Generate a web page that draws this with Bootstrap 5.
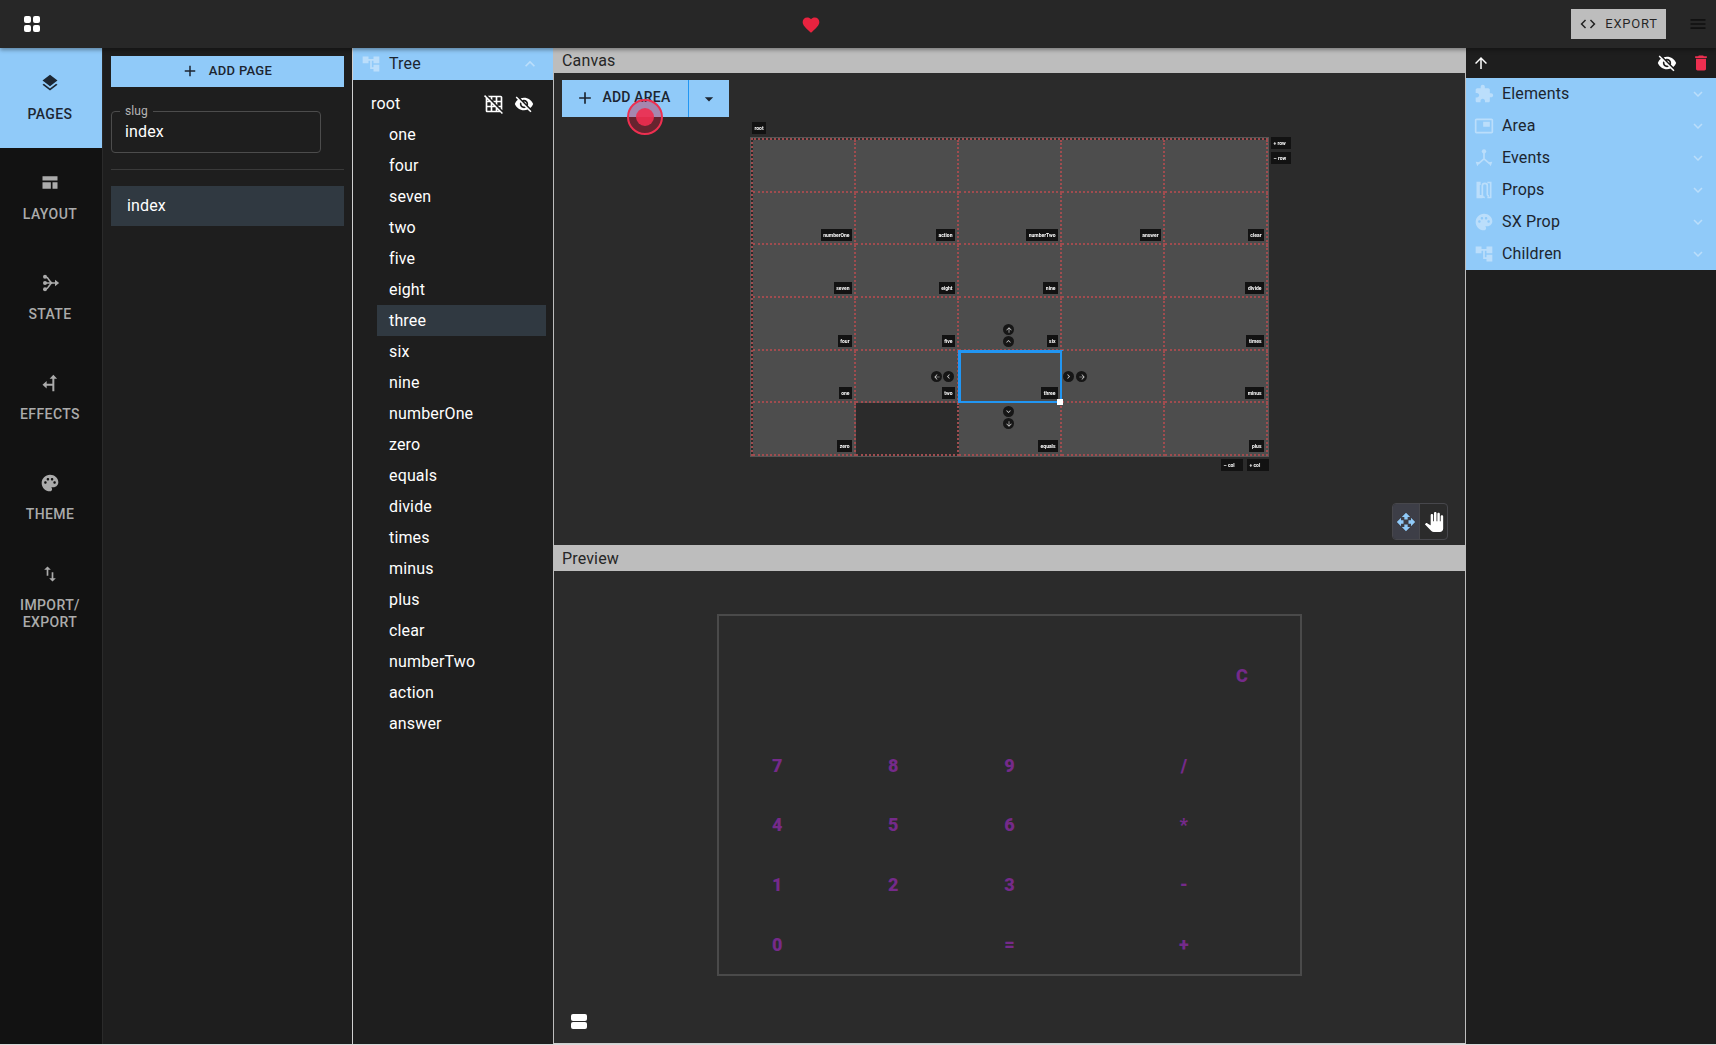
<!DOCTYPE html>
<html lang="en">
<head>
<meta charset="utf-8">
<title>Calculator builder</title>
<link href="https://cdn.jsdelivr.net/npm/bootstrap@5.3.0/dist/css/bootstrap.min.css" rel="stylesheet">
<style>
html,body{height:100%;margin:0;background:#d8d8d8;overflow:hidden}
body{font-family:Roboto,"Liberation Sans",sans-serif;font-size:16px;letter-spacing:.15px;color:#fff}
.ico{fill:currentColor;display:block}
.shell{height:calc(100vh - 1px);background:#1e1e1e}
.topbar{height:48px;background:#272727;flex:none;position:relative;z-index:5;box-shadow:0 2px 4px rgba(0,0,0,.35)}
.heart-slot{position:absolute;left:801px;top:15px;color:#e8233f}
.export-btn{width:95px;height:30px;margin-right:50px;background:#bdbdbd;color:rgba(0,0,0,.82);font-size:13px;font-weight:400;letter-spacing:.75px;border:0;border-radius:0;padding:0;gap:8px}
.export-btn:hover{background:#bdbdbd}
.burger{position:absolute;right:8px;top:14px;color:#111}
.apps{margin-left:24px;display:grid;grid-template-columns:7px 7px;gap:2px}
.apps i{display:block;width:7px;height:7px;border-radius:2px;background:#fff}
.rail{width:103px;flex:none;background:#121212;border-right:1px solid #2a2a2a}
.rail-item{height:100px;padding:0 2px 1px 0;color:#ababab;font-size:14px;font-weight:500;letter-spacing:.4px;line-height:17px;text-transform:uppercase;text-align:center;gap:13px}
.rail-item.active-rail{background:#90caf9;color:#1d2733}
.pages-col{width:249px;flex:none;background:#1e1e1e;padding:8px 8px 0 8px}
.blue-btn{background:#90caf9;color:#1c2530;border:0;border-radius:0;font-size:13px;font-weight:500;letter-spacing:.3px;padding:0}
.blue-btn:hover{background:#90caf9;color:#1c2530}
.add-page{width:100%;height:31px;gap:10px;padding:0 2px 2px 0}
.slug-box{position:relative;width:210px;height:42px;margin-top:24px;border:1px solid #4c4c4c;border-radius:4px;padding:10px 13px 0;line-height:20px}
.slug-box span{position:absolute;left:8px;top:-8px;padding:0 5px;background:#1e1e1e;font-size:12px;line-height:14px;color:#b5b5b5;letter-spacing:.1px}
.rule{height:1px;background:#3a3a3a;margin:16px 0}
.page-row{height:40px;background:#303941;padding-left:16px;line-height:40px}
.tree-col{width:201px;flex:none;background:#1e1e1e;border-left:1px solid #d0d0d0}
.pane-head{height:32px;background:#90caf9;color:#1c2530;padding-left:8px;padding-right:13px;gap:8px}
.pale{color:#bbdefb}
.root-row{height:31px;margin-top:8px;padding-left:18px;padding-right:19px}
.icon-pair{display:flex;gap:10px}
.tree-list{padding:0 7px 0 24px}
.tree-row{height:31px;line-height:31px;padding-left:12px;background:transparent;border:0;color:#fff;border-radius:0}
.tree-row.on{background:#303941}
.work-col{flex:1 1 auto;min-width:0;background:#2b2b2b;border-left:1px solid #bdbdbd;border-right:1px solid #bdbdbd;border-bottom:1px solid #cfcfcf}
.bar{background:#bdbdbd;color:#262626;padding-left:8px;flex:none}
.canvas-pane{height:497px;position:relative}
.canvas-pane .bar{height:25px;line-height:25px}
.add-group{margin:7px 0 0 8px;height:37px;width:167px;position:relative}
.add-main{width:127px;height:37px;gap:8px;font-size:14px;letter-spacing:.2px;border-right:1px solid #2196f3;padding:0 5px 2px 0}
.add-caret{width:40px;height:37px}
.click-dot{position:absolute;left:65px;top:19px;width:36px;height:36px;border-radius:50%;border:2px solid #ee2f50;background:rgba(200,25,55,.38);display:flex;align-items:center;justify-content:center}
.click-dot i{display:block;width:18px;height:18px;border-radius:50%;background:rgba(240,45,80,.9)}
.area-wrap{position:relative;width:517px;height:318px;margin:21px 0 0 197px}
.area-grid{display:grid;grid-template-columns:repeat(5,1fr);grid-template-rows:repeat(6,1fr);width:100%;height:100%;border-top:2px dotted #a04c4f;border-left:2px dotted #a04c4f;box-shadow:0 0 0 1px #555}
.cell{position:relative;background:#4d4d4d;border-right:2px dotted #a04c4f;border-bottom:2px dotted #a04c4f}
.cell.void{background:#2b2b2b}
.cell.picked{outline:3px solid #2196f3;outline-offset:-2px}
.tag{position:absolute;background:#121212;color:#fff;font-size:5px;font-weight:700;letter-spacing:0;line-height:12px;height:12px;padding:0 2.5px;white-space:nowrap}
.tag b{filter:blur(.3px);font-weight:700}
.cell .tag{right:2px;bottom:2px}
.tag-root{left:1px;top:-16px}
.tag-a{left:520px;top:-1px;width:20px}
.tag-b{left:520px;top:14px;width:20px}
.tag-c{left:470px;top:321px;width:22px}
.tag-d{left:496px;top:321px;width:22px}
.round{position:absolute;width:11px;height:11px;border-radius:50%;background:#161616;color:#d0d0d0;display:flex;align-items:center;justify-content:center}
.handle{position:absolute;left:306px;top:261px;width:6px;height:6px;background:#fff}
.view-toggle{position:absolute;right:17px;bottom:5px;width:56px;height:37px;border:1px solid #47474c;border-radius:4px;overflow:hidden}
.view-toggle div{width:28px;display:flex;align-items:center;justify-content:center}
.view-toggle .sel{background:#3d3e47;color:#90caf9;border-right:1px solid #47474c}
.preview-pane{flex:1 1 auto;position:relative;min-height:0}
.preview-pane .bar{height:26px;line-height:27px}
.calc{display:grid;grid-template-columns:repeat(5,1fr);grid-template-rows:repeat(6,1fr);width:585px;height:362px;margin:43px 0 0 163px;border:2px solid #4a4a4a;color:#752a8a;font-weight:900;font-size:18px;letter-spacing:0;align-items:center;justify-items:center}
.agenda{position:absolute;left:17px;bottom:13px;width:16px}
.agenda i{display:block;height:7px;border-radius:2px;background:#fff;margin-bottom:1px}
.props-col{width:250px;flex:none;background:#1e1e1e}
.props-top{height:30px;padding:0 5px 0 6px;color:#fff}
.top-pair{display:flex;align-items:center;gap:14px}
.trash{color:#ee2f50}
.acc-row{height:32px;background:#90caf9;color:#1c2530;padding:0 9px 0 8px;border:0;border-radius:0;gap:8px}
.acc-label{flex:1 1 auto}
</style>
</head>
<body>
<svg width="0" height="0" class="position-absolute" aria-hidden="true">
<symbol id="i-layers" viewBox="0 0 24 24"><path d="M11.99 18.54l-7.37-5.73L3 14.07l9 7 9-7-1.63-1.27-7.38 5.74zM12 16l7.36-5.73L21 9l-9-7-9 7 1.63 1.27L12 16z"/></symbol>
<symbol id="i-web" viewBox="0 0 24 24"><path d="M3 4h18v5H3zM3 11h10v8H3zM15 11h6v8h-6z"/></symbol>
<symbol id="i-state" viewBox="0 0 24 24"><path fill="none" stroke="currentColor" stroke-width="2" d="M7 5c4 0 4 7 8 7H19M7 19c4 0 4-7 8-7M7 12h8"/><circle cx="6" cy="4.5" r="2.4"/><circle cx="6" cy="12" r="2.4"/><circle cx="6" cy="19.5" r="2.4"/><path d="M18 8l5 4-5 4z"/></symbol>
<symbol id="i-effects" viewBox="0 0 24 24"><path d="M16 2l4.5 5h-3.3v15h-2.4V7h-3.3zM3 14l5-4.5v3.3h7v2.4H8v3.3z"/></symbol>
<symbol id="i-palette" viewBox="0 0 24 24"><path d="M12 2C6.49 2 2 6.49 2 12s4.49 10 10 10c1.38 0 2.5-1.12 2.5-2.5 0-.61-.23-1.2-.64-1.67-.08-.1-.13-.21-.13-.33 0-.28.22-.5.5-.5H16c3.31 0 6-2.69 6-6 0-4.96-4.49-9-10-9zm-5.5 11c-.83 0-1.5-.67-1.5-1.5S5.67 10 6.5 10s1.5.67 1.5 1.5S7.33 13 6.5 13zm3-4C8.67 9 8 8.33 8 7.5S8.67 6 9.5 6s1.5.67 1.5 1.5S10.33 9 9.5 9zm5 0c-.83 0-1.5-.67-1.5-1.5S13.67 6 14.5 6s1.5.67 1.5 1.5S15.33 9 14.5 9zm3 4c-.83 0-1.5-.67-1.5-1.5s.67-1.5 1.5-1.5 1.5.67 1.5 1.5-.67 1.5-1.5 1.5z"/></symbol>
<symbol id="i-impexp" viewBox="0 0 24 24"><path d="M9 3L5 6.99h3V14h2V6.99h3L9 3zm7 14.01V10h-2v7.01h-3L15 21l4-3.99h-3z"/></symbol>
<symbol id="i-ext" viewBox="0 0 24 24"><path d="M20.5 11H19V7c0-1.1-.9-2-2-2h-4V3.5C13 2.12 11.88 1 10.5 1S8 2.12 8 3.5V5H4c-1.1 0-1.99.9-1.99 2v3.8H3.5c1.49 0 2.7 1.21 2.7 2.7s-1.21 2.7-2.7 2.7H2V20c0 1.1.9 2 2 2h3.8v-1.5c0-1.49 1.21-2.7 2.7-2.7 1.49 0 2.7 1.21 2.7 2.7V22H17c1.1 0 2-.9 2-2v-4h1.5c1.38 0 2.5-1.12 2.5-2.5S21.88 11 20.5 11z"/></symbol>
<symbol id="i-pip" viewBox="0 0 24 24"><path d="M19 7h-8v6h8V7zm2-4H3c-1.1 0-2 .9-2 2v14c0 1.1.9 1.98 2 1.98h18c1.1 0 2-.88 2-1.98V5c0-1.1-.9-2-2-2zm0 16.01H3V4.98h18v14.03z"/></symbol>
<symbol id="i-events" viewBox="0 0 24 24"><path fill="none" stroke="currentColor" stroke-width="2" d="M12 5v8M12 13l-7 6M12 13l7 6"/><circle cx="12" cy="4" r="2.6"/><path d="M2 16.5l5 .5-3 5zM22 16.5l-5 .5 3 5z"/></symbol>
<symbol id="i-props" viewBox="0 0 24 24"><path fill="none" stroke="currentColor" stroke-width="2" d="M8 3H4v18h5v-2H6V5h2M13 21c-2 0-3-1-3-3V7c0-2 1-3 3-3s3 1 3 3v10c0 1 .5 2 2 2M16 3h4v18h-4"/></symbol>
<symbol id="i-tree" viewBox="0 0 24 24"><path d="M22 11V3h-7v3H9V3H2v8h7V8h2v10h4v3h7v-8h-7v3h-2V8h2v3z"/></symbol>
<symbol id="i-eyeoff" viewBox="0 0 24 24"><path d="M12 7c2.76 0 5 2.24 5 5 0 .65-.13 1.26-.36 1.83l2.92 2.92c1.51-1.26 2.7-2.89 3.43-4.75-1.73-4.39-6-7.5-11-7.5-1.4 0-2.74.25-3.98.7l2.16 2.16C10.74 7.13 11.35 7 12 7zM2 4.27l2.28 2.28.46.46C3.08 8.3 1.78 10.02 1 12c1.73 4.39 6 7.5 11 7.5 1.55 0 3.03-.3 4.38-.84l.42.42L19.73 22 21 20.73 3.27 3 2 4.27zM7.53 9.8l1.55 1.55c-.05.21-.08.43-.08.65 0 1.66 1.34 3 3 3 .22 0 .44-.03.65-.08l1.55 1.55c-.67.33-1.41.53-2.2.53-2.76 0-5-2.24-5-5 0-.79.2-1.53.53-2.2zm4.31-.78l3.15 3.15.02-.16c0-1.66-1.34-3-3-3l-.17.01z"/></symbol>
<symbol id="i-gridoff" viewBox="0 0 24 24"><path d="M8 4v1.45l2 2V4h4v4h-3.45l2 2H14v1.45l2 2V10h4v4h-3.45l2 2H20v1.45l2 2V4c0-1.1-.9-2-2-2H4.55l2 2H8zm8 0h4v4h-4V4zM1.27 1.27L0 2.55l2 2V20c0 1.1.9 2 2 2h15.46l2 2 1.27-1.27L1.27 1.27zM10 12.55L11.45 14H10v-1.45zm-6-6L5.45 8H4V6.55zM8 20H4v-4h4v4zm0-6H4v-4h3.45l.55.55V14zm6 6h-4v-4h3.45l.55.55V20zm2 0v-1.45L17.45 20H16z"/></symbol>
<symbol id="i-del" viewBox="0 0 24 24"><path d="M6 19c0 1.1.9 2 2 2h8c1.1 0 2-.9 2-2V7H6v12zM19 4h-3.5l-1-1h-5l-1 1H5v2h14V4z"/></symbol>
<symbol id="i-up" viewBox="0 0 24 24"><path d="M4 12l1.41 1.41L11 7.83V20h2V7.83l5.58 5.59L20 12l-8-8-8 8z"/></symbol>
<symbol id="i-code" viewBox="0 0 24 24"><path d="M9.4 16.6L4.8 12l4.6-4.6L8 6l-6 6 6 6 1.4-1.4zm5.2 0l4.6-4.6-4.6-4.6L16 6l6 6-6 6-1.4-1.4z"/></symbol>
<symbol id="i-menu" viewBox="0 0 24 24"><path d="M3 18h18v-2H3v2zm0-5h18v-2H3v2zm0-7v2h18V6H3z"/></symbol>
<symbol id="i-heart" viewBox="0 0 24 24"><path d="M12 21.35l-1.45-1.32C5.4 15.36 2 12.28 2 8.5 2 5.42 4.42 3 7.5 3c1.74 0 3.41.81 4.5 2.09C13.09 3.81 14.76 3 16.5 3 19.58 3 22 5.42 22 8.5c0 3.78-3.4 6.86-8.55 11.54L12 21.35z"/></symbol>
<symbol id="i-add" viewBox="0 0 24 24"><path d="M19 13h-6v6h-2v-6H5v-2h6V5h2v6h6v2z"/></symbol>
<symbol id="i-more" viewBox="0 0 24 24"><path d="M16.59 8.59L12 13.17 7.41 8.59 6 10l6 6 6-6z"/></symbol>
<symbol id="i-less" viewBox="0 0 24 24"><path d="M12 8l-6 6 1.41 1.41L12 10.83l4.59 4.58L18 14z"/></symbol>
<symbol id="i-drop" viewBox="0 0 24 24"><path d="M7 10l5 5 5-5z"/></symbol>
<symbol id="i-move" viewBox="0 0 24 24"><path d="M10 9h4V6h3l-5-5-5 5h3v3zm-1 1H6V7l-5 5 5 5v-3h3v-4zm14 2l-5-5v3h-3v4h3v3l5-5zm-9 3h-4v3H7l5 5 5-5h-3v-3z"/></symbol>
<symbol id="i-hand" viewBox="0 0 24 24"><path d="M23 5.5V20c0 2.2-1.8 4-4 4h-7.3c-1.08 0-2.1-.43-2.85-1.19L1 14.83s1.26-1.23 1.3-1.25c.22-.19.49-.29.79-.29.22 0 .42.06.6.16.04.01 4.31 2.46 4.31 2.46V4c0-.83.67-1.5 1.5-1.5S11 3.17 11 4v7h1V1.5c0-.83.67-1.5 1.5-1.5S15 .67 15 1.5V11h1V2.5c0-.83.67-1.5 1.5-1.5s1.5.67 1.5 1.5V11h1V5.5c0-.83.67-1.5 1.5-1.5s1.5.67 1.5 1.5z"/></symbol>
</svg>

<div class="shell d-flex flex-column">
  <header class="topbar d-flex align-items-center justify-content-between">
    <div class="apps"><i></i><i></i><i></i><i></i></div>
    <div class="heart-slot"><svg class="ico" width="20" height="20"><use href="#i-heart"/></svg></div>
    <button type="button" class="btn export-btn d-flex align-items-center justify-content-center"><svg class="ico" width="18" height="18"><use href="#i-code"/></svg>EXPORT</button>
    <div class="burger"><svg class="ico" width="20" height="20"><use href="#i-menu"/></svg></div>
  </header>

  <div class="d-flex flex-grow-1" style="min-height:0">
    <nav class="rail d-flex flex-column">
      <div class="rail-item active-rail d-flex flex-column align-items-center justify-content-center"><svg class="ico" width="20" height="20"><use href="#i-layers"/></svg><span>Pages</span></div>
      <div class="rail-item d-flex flex-column align-items-center justify-content-center"><svg class="ico" width="20" height="20"><use href="#i-web"/></svg><span>Layout</span></div>
      <div class="rail-item d-flex flex-column align-items-center justify-content-center"><svg class="ico" width="20" height="20"><use href="#i-state"/></svg><span>State</span></div>
      <div class="rail-item d-flex flex-column align-items-center justify-content-center"><svg class="ico" width="20" height="20"><use href="#i-effects"/></svg><span>Effects</span></div>
      <div class="rail-item d-flex flex-column align-items-center justify-content-center"><svg class="ico" width="20" height="20"><use href="#i-palette"/></svg><span>Theme</span></div>
      <div class="rail-item d-flex flex-column align-items-center justify-content-center"><svg class="ico" width="20" height="20"><use href="#i-impexp"/></svg><span>Import/<br>Export</span></div>
    </nav>

    <section class="pages-col">
      <button type="button" class="btn blue-btn add-page d-flex align-items-center justify-content-center"><svg class="ico" width="18" height="18"><use href="#i-add"/></svg>ADD PAGE</button>
      <div class="slug-box"><span>slug</span>index</div>
      <div class="rule"></div>
      <div class="page-row">index</div>
    </section>

    <section class="tree-col">
      <div class="pane-head d-flex align-items-center"><svg class="ico pale" width="20" height="20"><use href="#i-tree"/></svg><span class="flex-grow-1">Tree</span><svg class="ico pale" width="20" height="20"><use href="#i-less"/></svg></div>
      <div class="root-row d-flex align-items-center justify-content-between">
        <span>root</span>
        <span class="icon-pair"><svg class="ico" width="20" height="20"><use href="#i-gridoff"/></svg><svg class="ico" width="20" height="20"><use href="#i-eyeoff"/></svg></span>
      </div>
      <div class="list-group tree-list">
        <div class="tree-row">one</div><div class="tree-row">four</div><div class="tree-row">seven</div><div class="tree-row">two</div><div class="tree-row">five</div><div class="tree-row">eight</div><div class="tree-row on">three</div><div class="tree-row">six</div><div class="tree-row">nine</div><div class="tree-row">numberOne</div><div class="tree-row">zero</div><div class="tree-row">equals</div><div class="tree-row">divide</div><div class="tree-row">times</div><div class="tree-row">minus</div><div class="tree-row">plus</div><div class="tree-row">clear</div><div class="tree-row">numberTwo</div><div class="tree-row">action</div><div class="tree-row">answer</div>
      </div>
    </section>

    <main class="work-col d-flex flex-column">
      <section class="canvas-pane">
        <div class="bar">Canvas</div>
        <div class="add-group d-flex">
          <button type="button" class="btn blue-btn add-main d-flex align-items-center justify-content-center"><svg class="ico" width="20" height="20"><use href="#i-add"/></svg>ADD AREA</button>
          <button type="button" class="btn blue-btn add-caret d-flex align-items-center justify-content-center"><svg class="ico" width="20" height="20"><use href="#i-drop"/></svg></button>
          <div class="click-dot"><i></i></div>
        </div>
        <div class="area-wrap">
          <div class="area-grid">
            <div class="cell"></div><div class="cell"></div><div class="cell"></div><div class="cell"></div><div class="cell"></div>
            <div class="cell"><span class="tag"><b>numberOne</b></span></div><div class="cell"><span class="tag"><b>action</b></span></div><div class="cell"><span class="tag"><b>numberTwo</b></span></div><div class="cell"><span class="tag"><b>answer</b></span></div><div class="cell"><span class="tag"><b>clear</b></span></div>
            <div class="cell"><span class="tag"><b>seven</b></span></div><div class="cell"><span class="tag"><b>eight</b></span></div><div class="cell"><span class="tag"><b>nine</b></span></div><div class="cell"></div><div class="cell"><span class="tag"><b>divide</b></span></div>
            <div class="cell"><span class="tag"><b>four</b></span></div><div class="cell"><span class="tag"><b>five</b></span></div><div class="cell"><span class="tag"><b>six</b></span></div><div class="cell"></div><div class="cell"><span class="tag"><b>times</b></span></div>
            <div class="cell"><span class="tag"><b>one</b></span></div><div class="cell"><span class="tag"><b>two</b></span></div><div class="cell picked"><span class="tag"><b>three</b></span></div><div class="cell"></div><div class="cell"><span class="tag"><b>minus</b></span></div>
            <div class="cell"><span class="tag"><b>zero</b></span></div><div class="cell void"></div><div class="cell"><span class="tag"><b>equals</b></span></div><div class="cell"></div><div class="cell"><span class="tag"><b>plus</b></span></div>
          </div>
          <span class="tag tag-root"><b>root</b></span>
          <span class="tag tag-a"><b>+ row</b></span>
          <span class="tag tag-b"><b>– row</b></span>
          <span class="tag tag-c"><b>– col</b></span>
          <span class="tag tag-d"><b>+ col</b></span>
          <span class="round" style="left:252px;top:186px"><svg class="ico" width="8" height="8"><use href="#i-up"/></svg></span>
          <span class="round" style="left:252px;top:198px"><svg class="ico" width="9" height="9"><use href="#i-less"/></svg></span>
          <span class="round" style="left:252px;top:268px"><svg class="ico" width="9" height="9"><use href="#i-more"/></svg></span>
          <span class="round" style="left:252px;top:280px"><svg class="ico" width="8" height="8" style="transform:rotate(180deg)"><use href="#i-up"/></svg></span>
          <span class="round" style="left:180px;top:233px"><svg class="ico" width="8" height="8" style="transform:rotate(-90deg)"><use href="#i-up"/></svg></span>
          <span class="round" style="left:192px;top:233px"><svg class="ico" width="9" height="9" style="transform:rotate(-90deg)"><use href="#i-less"/></svg></span>
          <span class="round" style="left:312px;top:233px"><svg class="ico" width="9" height="9" style="transform:rotate(90deg)"><use href="#i-less"/></svg></span>
          <span class="round" style="left:325px;top:233px"><svg class="ico" width="8" height="8" style="transform:rotate(90deg)"><use href="#i-up"/></svg></span>
          <span class="handle"></span>
        </div>
        <div class="view-toggle d-flex">
          <div class="sel"><svg class="ico" width="20" height="20"><use href="#i-move"/></svg></div>
          <div class="text-white"><svg class="ico" width="20" height="20"><use href="#i-hand"/></svg></div>
        </div>
      </section>
      <section class="preview-pane">
        <div class="bar">Preview</div>
        <div class="calc">
          <span style="grid-area:1/5/3/6">C</span>
          <span style="grid-area:3/1">7</span><span style="grid-area:3/2">8</span><span style="grid-area:3/3">9</span><span style="grid-area:3/4/4/6">/</span>
          <span style="grid-area:4/1">4</span><span style="grid-area:4/2">5</span><span style="grid-area:4/3">6</span><span style="grid-area:4/4/5/6">*</span>
          <span style="grid-area:5/1">1</span><span style="grid-area:5/2">2</span><span style="grid-area:5/3">3</span><span style="grid-area:5/4/6/6">-</span>
          <span style="grid-area:6/1">0</span><span style="grid-area:6/3">=</span><span style="grid-area:6/4/7/6">+</span>
        </div>
        <div class="agenda"><i></i><i></i></div>
      </section>
    </main>

    <aside class="props-col">
      <div class="props-top d-flex align-items-center justify-content-between">
        <svg class="ico" width="18" height="18"><use href="#i-up"/></svg>
        <span class="top-pair"><svg class="ico" width="20" height="20"><use href="#i-eyeoff"/></svg><svg class="ico trash" width="20" height="20"><use href="#i-del"/></svg></span>
      </div>
      <div class="list-group">
        <div class="acc-row d-flex align-items-center"><svg class="ico pale" width="20" height="20"><use href="#i-ext"/></svg><span class="acc-label">Elements</span><svg class="ico pale" width="18" height="18"><use href="#i-more"/></svg></div>
        <div class="acc-row d-flex align-items-center"><svg class="ico pale" width="20" height="20"><use href="#i-pip"/></svg><span class="acc-label">Area</span><svg class="ico pale" width="18" height="18"><use href="#i-more"/></svg></div>
        <div class="acc-row d-flex align-items-center"><svg class="ico pale" width="20" height="20"><use href="#i-events"/></svg><span class="acc-label">Events</span><svg class="ico pale" width="18" height="18"><use href="#i-more"/></svg></div>
        <div class="acc-row d-flex align-items-center"><svg class="ico pale" width="20" height="20"><use href="#i-props"/></svg><span class="acc-label">Props</span><svg class="ico pale" width="18" height="18"><use href="#i-more"/></svg></div>
        <div class="acc-row d-flex align-items-center"><svg class="ico pale" width="20" height="20"><use href="#i-palette"/></svg><span class="acc-label">SX Prop</span><svg class="ico pale" width="18" height="18"><use href="#i-more"/></svg></div>
        <div class="acc-row d-flex align-items-center"><svg class="ico pale" width="20" height="20"><use href="#i-tree"/></svg><span class="acc-label">Children</span><svg class="ico pale" width="18" height="18"><use href="#i-more"/></svg></div>
      </div>
    </aside>
  </div>
</div>
<script src="https://cdn.jsdelivr.net/npm/bootstrap@5.3.0/dist/js/bootstrap.bundle.min.js"></script>
</body>
</html>
